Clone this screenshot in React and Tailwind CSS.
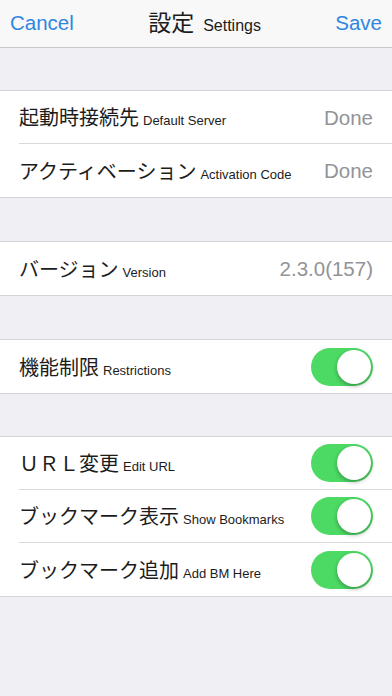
import React from "react";

const Toggle = () => (
  <div className="relative w-[62px] h-[38px] rounded-full bg-[#4cd964] shrink-0">
    <div className="absolute right-[2px] top-[2px] w-[34px] h-[34px] rounded-full bg-white shadow-[0_2px_4px_rgba(0,0,0,0.3)]" />
  </div>
);

const Row = ({ jp, en, value, toggle, last }) => (
  <div className="pl-[19px]">
    <div
      className={`flex items-center justify-between pr-[19px] h-[53px] ${last ? "" : "border-b border-[#d9d9dd]"}`}
    >
      <div className="flex items-baseline gap-[4px] pt-[2px]">
        <span className="text-[20px] text-[#1c1c1c]">{jp}</span>
        <span className="text-[13px] text-[#1c1c1c]">{en}</span>
      </div>
      {value && <span className="text-[20.5px] text-[#939398] pt-[2px]">{value}</span>}
      {toggle && <Toggle />}
    </div>
  </div>
);

const Section = ({ children }) => (
  <div className="bg-white border-y border-[#d4d4d8]">{children}</div>
);

export default function App() {
  const font = { fontFamily: '"Liberation Sans", "Noto Sans CJK JP", sans-serif' };
  return (
    <div className="w-[392px] h-[696px] bg-[#efeff4] overflow-hidden" style={font}>
      {/* nav bar */}
      <div className="h-[48px] bg-[#f8f8f8] border-b border-[#c8c7cc] flex items-center justify-between px-[10px]">
        <span className="text-[20.5px] text-[#2f86e0]">Cancel</span>
        <div className="flex items-baseline gap-[9px]">
          <span className="text-[23px] text-[#1c1c1c]">設定</span>
          <span className="text-[16px] text-[#1c1c1c]">Settings</span>
        </div>
        <span className="text-[20.5px] text-[#2f86e0]">Save</span>
      </div>

      <div className="h-[42px]" />
      <Section>
        <Row jp="起動時接続先" en="Default Server" value="Done" />
        <Row jp="アクティベーション" en="Activation Code" value="Done" last />
      </Section>

      <div className="h-[43px]" />
      <Section>
        <Row jp="バージョン" en="Version" value="2.3.0(157)" last />
      </Section>

      <div className="h-[43px]" />
      <Section>
        <Row jp="機能制限" en="Restrictions" toggle last />
      </Section>

      <div className="h-[42px]" />
      <Section>
        <Row jp="ＵＲＬ変更" en="Edit URL" toggle />
        <Row jp="ブックマーク表示" en="Show Bookmarks" toggle />
        <Row jp="ブックマーク追加" en="Add BM Here" toggle last />
      </Section>
    </div>
  );
}
